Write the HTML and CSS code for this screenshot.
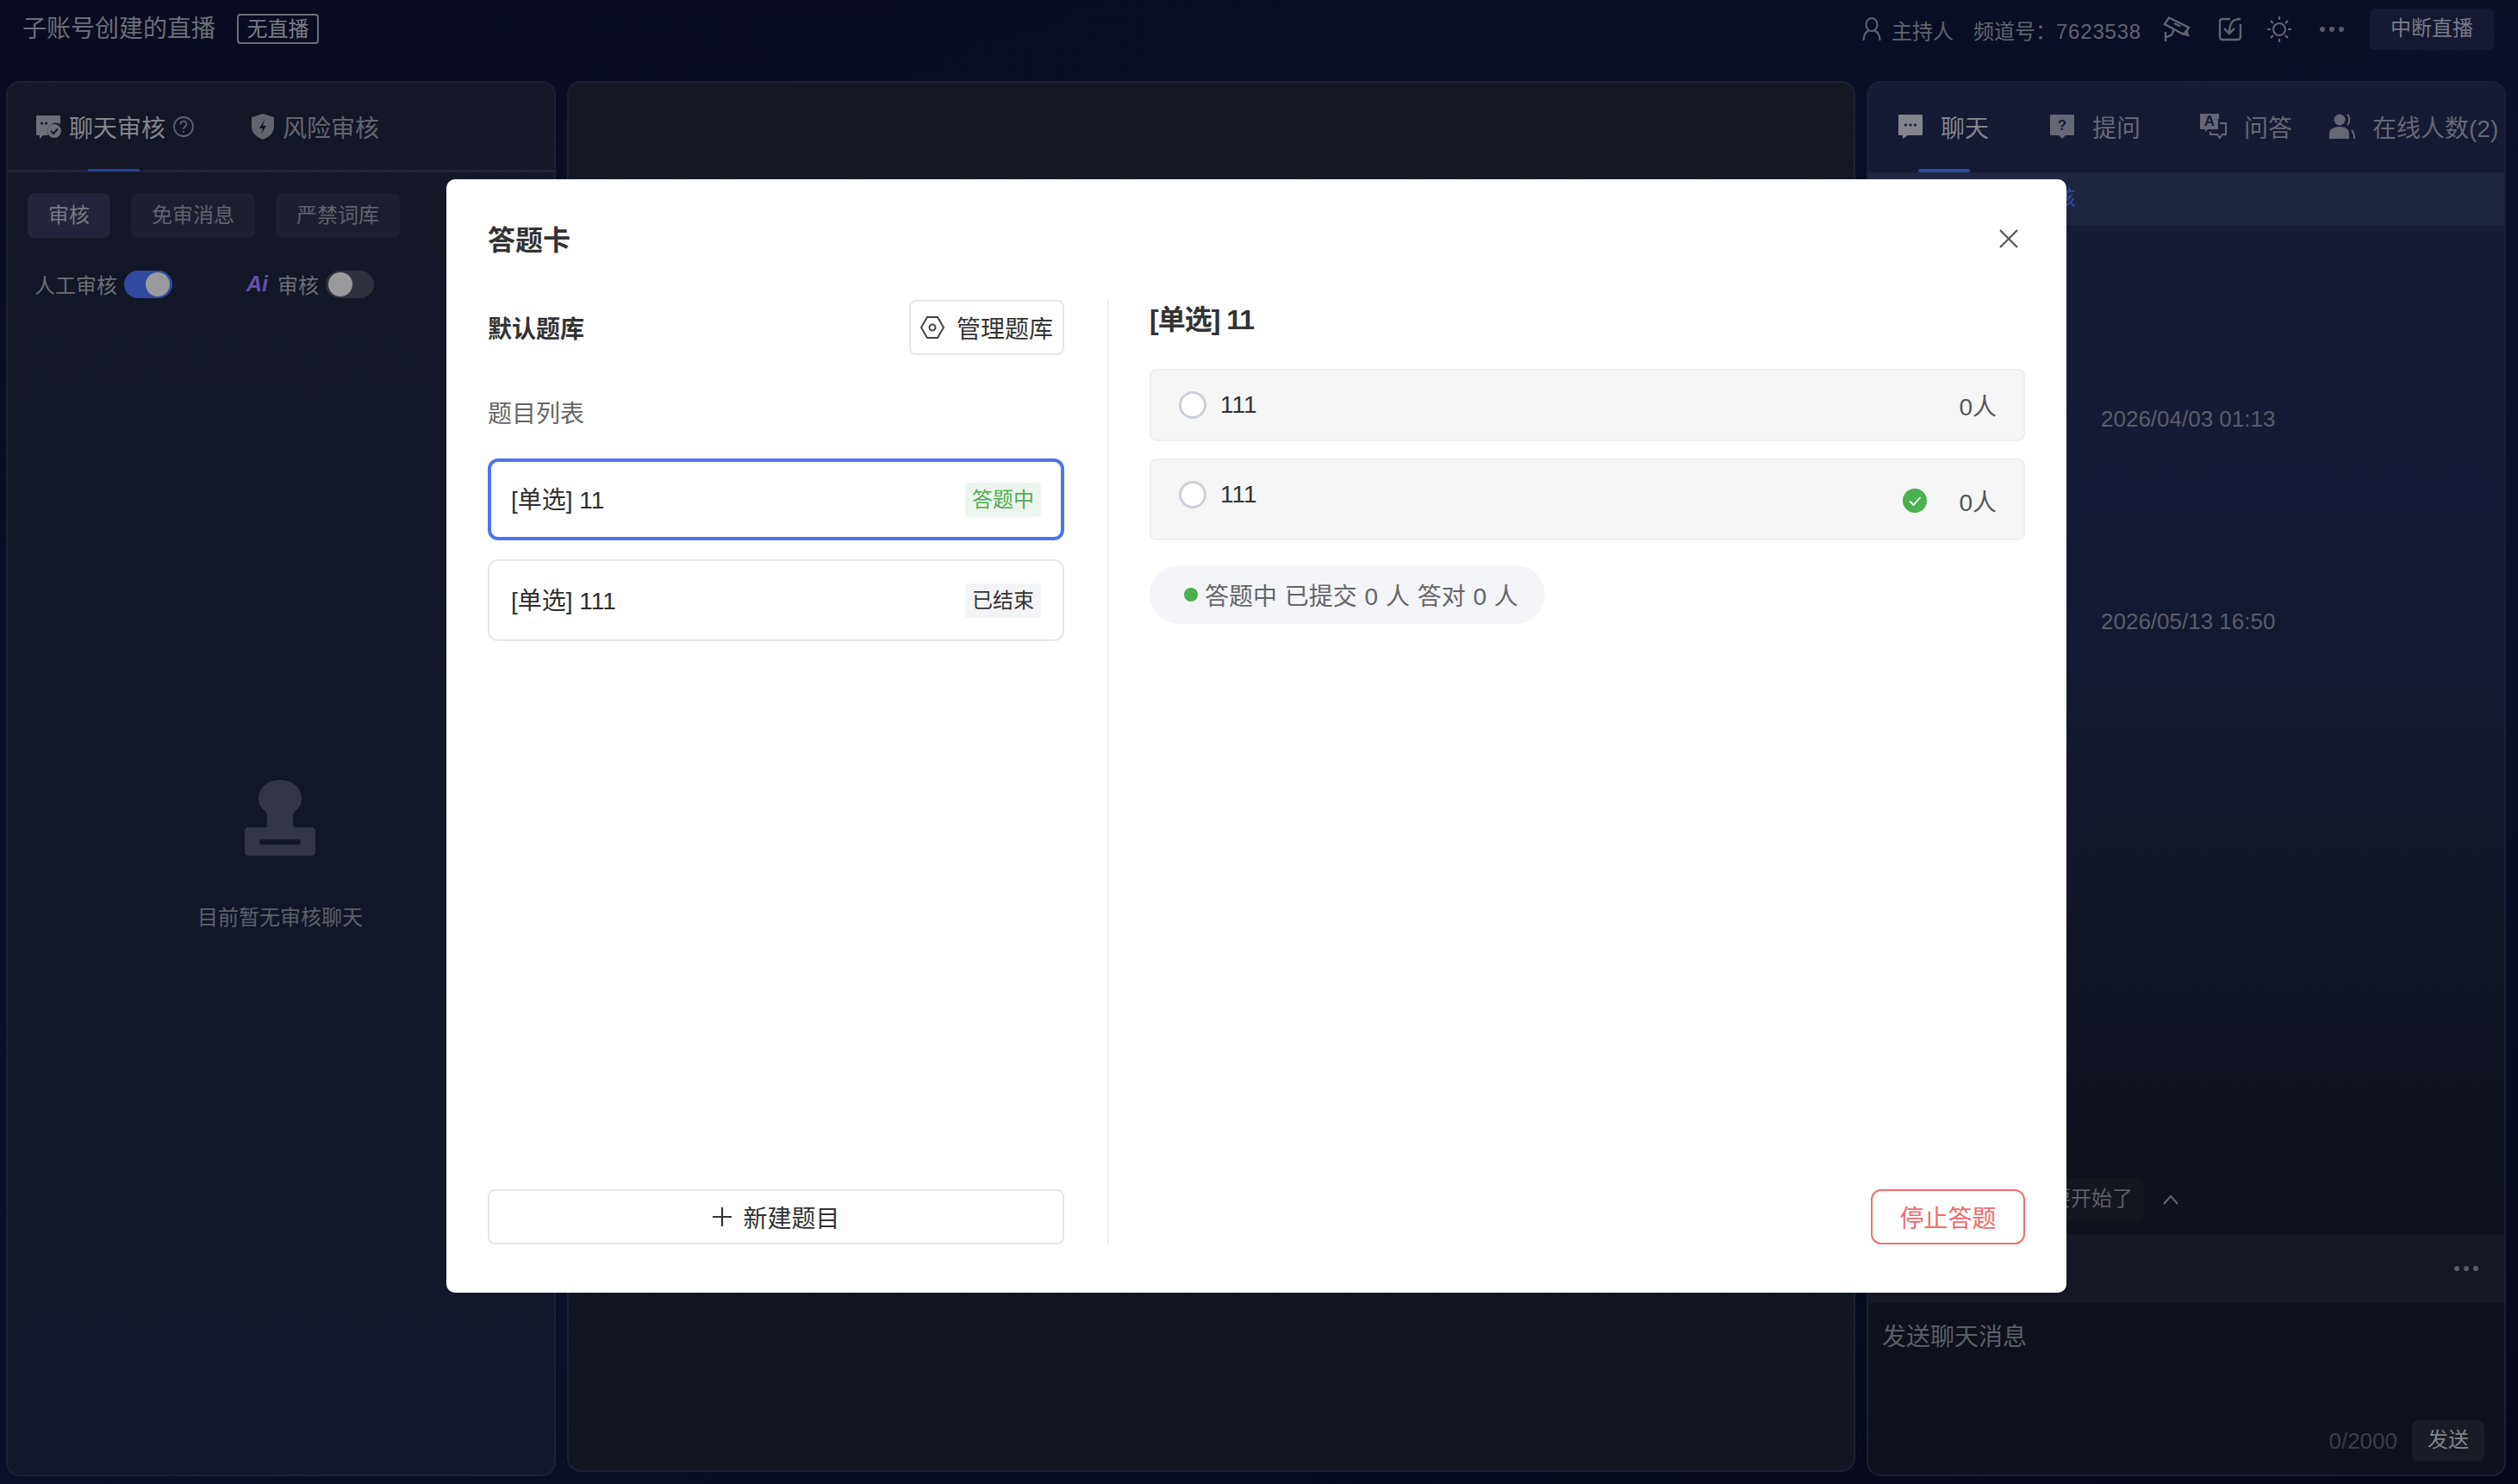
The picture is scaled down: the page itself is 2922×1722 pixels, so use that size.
FILE: index.html
```html
<!DOCTYPE html>
<html>
<head>
  <title>答题卡</title>
  <link rel="stylesheet" href="styles.css">
</head>
<body>

<div class="app">
  <!-- top bar -->
  <div class="topbar">
    <div class="live-title">子账号创建的直播</div>
    <div class="live-badge">无直播</div>
    <div class="top-right">
      <svg class="ic-user" width="22" height="28" viewBox="0 0 22 28" fill="none" stroke="#62646e" stroke-width="2"><ellipse cx="11" cy="8.5" rx="6.5" ry="7.5"/><path d="M1.5 27c0-7 3-10 6-11.5M20.5 27c0-7-3-10-6-11.5"/></svg>
      <span class="host">主持人</span>
      <span class="channel">频道号：<span class="channel-no">7623538</span></span>
      <svg class="ic-cam" width="32" height="30" viewBox="0 0 32 30" fill="none" stroke="#62646e" stroke-width="2.4"><path d="M7 1.500L30 13l-6 8L2 9z"/><path d="M13 8l7 3.500"/><path d="M3 18v11M3 24.500l7-3 3-7"/><path d="M23 20l5-2 1 4z" fill="#62646e"/></svg>
      <svg class="ic-doc" width="28" height="28" viewBox="0 0 28 28" fill="none" stroke="#62646e" stroke-width="2.4"><path d="M14 2H5a3 3 0 0 0-3 3v18a3 3 0 0 0 3 3h18a3 3 0 0 0 3-3V8"/><path d="M26 2c-8 0-13 3-13 17M7 13l6 6 6-6"/></svg>
      <svg class="ic-sun" width="28" height="30" viewBox="0 0 28 30" fill="none" stroke="#62646e" stroke-width="2.2"><circle cx="14" cy="15" r="7"/><path d="M14 0v4M14 26v4M0 15h4M24 15h4M4 5l3 3M21 22l3 3M24 5l-3 3M7 22l-3 3"/></svg>
      <span class="dots"><i></i><i></i><i></i></span>
      <div class="stop-live">中断直播</div>
    </div>
  </div>

  <div class="panels">
    <!-- left: moderation -->
    <div class="panel panel-left">
      <div class="left-tabs">
        <div class="left-tab on">
          <svg width="30" height="30" viewBox="0 0 30 30"><path fill="#6d6e78" d="M2 2h26a1 1 0 0 1 1 1v9a10 10 0 0 0-14 13H9l-4 4v-4H2a1 1 0 0 1-1-1V3a1 1 0 0 1 1-1z"/><circle cx="7.5" cy="11" r="1.5" fill="#131726"/><circle cx="12.5" cy="11" r="1.5" fill="#131726"/><circle cx="22" cy="20" r="8" fill="#6d6e78"/><path d="M18 20l3 3 5-5.500" fill="none" stroke="#131726" stroke-width="2"/></svg>
          <span>聊天审核</span>
          <svg class="help" width="24" height="24" viewBox="0 0 24 24" fill="none" stroke="#5f616c" stroke-width="1.8"><circle cx="12" cy="12" r="11"/><path d="M8.500 9.500c0-5 7-5 7-.5 0 3-3.500 2.500-3.500 6"/><path d="M12 17v2"/></svg>
        </div>
        <div class="left-tab">
          <svg width="28" height="30" viewBox="0 0 28 30"><path fill="#62646e" d="M14 0l13 4v11c0 8-6 12-13 15C7 27 1 23 1 15V4z"/><path fill="#131726" d="M16 7l-6 10h4l-2 7 6-10h-4z"/></svg>
          <span>风险审核</span>
        </div>
      </div>
      <div class="sub-btns">
        <div class="sub-btn on">审核</div>
        <div class="sub-btn">免审消息</div>
        <div class="sub-btn">严禁词库</div>
      </div>
      <div class="switches">
        <span class="switch-label">人工审核</span>
        <span class="toggle on"><i></i></span>
        <span class="ai">Ai</span>
        <span class="switch-label">审核</span>
        <span class="toggle"><i></i></span>
      </div>
      <div class="empty">
        <svg width="82" height="88" viewBox="0 0 82 88"><path fill="#333644" d="M41 0c14 0 25 9 25 22 0 6-3 10-6 13-3 2-4 4-4 7v9c0 2 1 4 3 4h19c2 0 4 2 4 4v25c0 2-2 4-4 4H4c-2 0-4-2-4-4V59c0-2 2-4 4-4h20c2 0 2-2 2-4v-9c0-3-1-5-4-7-3-3-6-7-6-13C16 9 27 0 41 0z"/><rect x="17" y="69" width="48" height="6" rx="3" fill="#12172a"/></svg>
        <div class="empty-text">目前暂无审核聊天</div>
      </div>
    </div>

    <!-- middle: stage -->
    <div class="panel panel-mid"></div>

    <!-- right: chat -->
    <div class="panel panel-right">
      <div class="right-tabs">
        <div class="right-tab on">
          <svg width="30" height="30" viewBox="0 0 30 30"><path fill="#83848c" d="M2 1h26a1 1 0 0 1 1 1v22a1 1 0 0 1-1 1H12l-6 4v-4H2a1 1 0 0 1-1-1V2a1 1 0 0 1 1-1z"/><circle cx="9.5" cy="13" r="1.6" fill="#161c36"/><circle cx="15" cy="13" r="1.6" fill="#161c36"/><circle cx="20.5" cy="13" r="1.6" fill="#161c36"/></svg>
          <span>聊天</span>
          <i class="tab-line"></i>
        </div>
        <div class="right-tab">
          <svg width="30" height="30" viewBox="0 0 30 30"><path fill="#676875" d="M2 1h26a1 1 0 0 1 1 1v22a1 1 0 0 1-1 1h-9l-4 4-4-4H2a1 1 0 0 1-1-1V2a1 1 0 0 1 1-1z"/><text x="15" y="19" class="glyph">?</text></svg>
          <span>提问</span>
        </div>
        <div class="right-tab">
          <svg width="32" height="30" viewBox="0 0 32 30"><path fill="#676875" d="M1 0h22v6h-1v12H10l-3 3v-3H1z"/><text x="12" y="14" class="glyph">A</text><path fill="none" stroke="#676875" stroke-width="2" d="M24 11h7v13h-4l-3 4-3-4H13v-3"/></svg>
          <span>问答</span>
        </div>
        <div class="right-tab">
          <svg width="30" height="30" viewBox="0 0 30 30"><circle cx="12" cy="7" r="6.5" fill="#676875"/><path fill="#676875" d="M0 29v-6c0-5 5-8 12-8s11 3 11 8v6z"/><path fill="none" stroke="#676875" stroke-width="2" d="M21 1c3 2 3 9 0 12M26 19c2 2 3 6 3 10"/></svg>
          <span>在线人数(2)</span>
        </div>
      </div>
      <div class="notice">聊天审核</div>
      <div class="messages">
        <div class="msg-time">2026/04/03 01:13</div>
        <div class="msg-time">2026/05/13 16:50</div>
      </div>
      <div class="pinned">
        <div class="pinned-chip">直播马上就要开始了</div>
        <svg width="18" height="12" viewBox="0 0 18 12" fill="none" stroke="#64666e" stroke-width="2"><path d="M1 11l8-9 8 9"/></svg>
      </div>
      <div class="toolbar"><span class="dots"><i></i><i></i><i></i></span></div>
      <div class="composer">
        <div class="placeholder">发送聊天消息</div>
        <div class="composer-foot">
          <span class="count">0/2000</span>
          <span class="send">发送</span>
        </div>
      </div>
    </div>
  </div>
</div>

<!-- dialog -->
<div class="modal">
  <div class="modal-head">
    <div class="modal-title">答题卡</div>
    <svg class="close" width="22" height="22" viewBox="0 0 22 22" fill="none" stroke="#555" stroke-width="2.2"><path d="M1 1l20 20M21 1L1 21"/></svg>
  </div>
  <div class="modal-body">
    <div class="col-left">
      <div class="bank-row">
        <div class="bank-name">默认题库</div>
        <div class="btn btn-manage">
          <svg width="28" height="30" viewBox="0 0 28 30" fill="none" stroke="#444" stroke-width="2"><path d="M8 3h12l7 12-7 12H8L1 15z"/><circle cx="14" cy="15" r="3.5"/></svg>
          管理题库
        </div>
      </div>
      <div class="list-label">题目列表</div>
      <div class="q-list">
        <div class="q-item active">
          <span class="q-name">[单选] 11</span>
          <span class="tag tag-green">答题中</span>
        </div>
        <div class="q-item">
          <span class="q-name">[单选] 111</span>
          <span class="tag">已结束</span>
        </div>
      </div>
      <div class="btn btn-new">
        <svg width="24" height="24" viewBox="0 0 24 24" stroke="#333" stroke-width="2.2"><path d="M12 1v22M1 12h22"/></svg>
        新建题目
      </div>
    </div>
    <div class="col-right">
      <div class="q-title">[单选] 11</div>
      <div class="opt">
        <div class="opt-main"><i class="radio"></i>111</div>
        <div class="opt-side">0人</div>
      </div>
      <div class="opt opt-correct">
        <div class="opt-main"><i class="radio"></i>111</div>
        <div class="opt-side">
          <svg width="28" height="28" viewBox="0 0 28 28"><circle cx="14" cy="14" r="14" fill="#4caf50"/><path d="M8 14.500l4.500 4.500 8-9" fill="none" stroke="#fff" stroke-width="1.8"/></svg>
          <span>0人</span>
        </div>
      </div>
      <div class="status"><i class="status-dot"></i>答题中 已提交 0 人 答对 0 人</div>
      <div class="btn btn-stop">停止答题</div>
    </div>
  </div>
</div>

</body>
</html>
```

FILE: styles.css
```css
* {
  box-sizing: border-box;
}
body {
  margin: 0;
  width: 2922px;
  height: 1722px;
  overflow: hidden;
  font-family: "Liberation Sans", "Noto Sans CJK SC", sans-serif;
  background: linear-gradient(160deg, #090c20 0%, #0b1029 60%, #050818 100%);
  position: relative;
}
.app {
  display: flex;
  flex-direction: column;
  height: 1722px;
}

/* top bar */
.topbar {
  height: 94px;
  flex: none;
  display: flex;
  align-items: flex-start;
  padding: 16px 28px 0 26px;
}
.live-title {
  font-size: 28px;
  line-height: 36px;
  color: #6c6e76;
}
.live-badge {
  margin-left: 25px;
  width: 95px;
  height: 35px;
  border: 2px solid #6c6e76;
  border-radius: 4px;
  font-size: 24px;
  line-height: 31px;
  text-align: center;
  color: #7c7e86;
}
.top-right {
  margin-left: auto;
  margin-top: -6px;
  height: 48px;
  display: flex;
  align-items: center;
  font-size: 24px;
  color: #62646e;
}
.host {
  margin-left: 12px;
}
.channel {
  margin-left: 23px;
}
.channel-no {
  letter-spacing: 0.8px;
}
.ic-cam {
  margin-left: 25px;
}
.ic-doc {
  margin-left: 32px;
}
.ic-sun {
  margin-left: 29px;
}
.top-right .dots {
  margin-left: 33px;
}
.dots {
  display: inline-flex;
  gap: 5px;
}
.dots i {
  width: 6px;
  height: 6px;
  border-radius: 50%;
  background: #5a5c66;
}
.stop-live {
  margin-left: 30px;
  width: 144px;
  height: 48px;
  line-height: 46px;
  text-align: center;
  background: #141830;
  border-radius: 6px;
  color: #787a88;
}

/* panels */
.panels {
  flex: 1;
  display: grid;
  grid-template-columns: 638px 1495px 742px;
  gap: 13px;
  padding: 0 13px 9px 7px;
  min-height: 0;
}
.panel {
  border: 2px solid #1c2034;
  border-radius: 16px;
  display: flex;
  flex-direction: column;
  overflow: hidden;
}
.panel-left {
  background: linear-gradient(180deg, #131726 0%, #11172a 100%);
}
.panel-mid {
  margin-bottom: 5px;
  background: linear-gradient(180deg, #141723 0%, #10151f 100%);
}
.panel-right {
  border-color: #181e36;
  background: linear-gradient(180deg, #161b33 0%, #151b36 30%, #0d111c 78%);
}

/* left panel */
.left-tabs {
  height: 104px;
  flex: none;
  display: flex;
  align-items: center;
  padding: 0 0 0 32px;
  border-bottom: 3px solid #1e2233;
  font-size: 28px;
  color: #63656f;
}
.left-tab {
  display: flex;
  align-items: center;
  position: relative;
  gap: 9px;
  margin-right: 66px;
}
.left-tab.on {
  color: #84858c;
}
.left-tab.on::after {
  content: "";
  position: absolute;
  left: 61px;
  bottom: -32px;
  width: 60px;
  height: 3px;
  background: #2b4290;
}
.sub-btns {
  display: flex;
  gap: 24px;
  margin: 24px 0 0 23px;
}
.sub-btn {
  height: 52px;
  line-height: 51px;
  padding: 0 24px;
  border-radius: 8px;
  background: #1b1f30;
  font-size: 24px;
  color: #60626c;
}
.sub-btn.on {
  background: #23263a;
  color: #787a82;
}
.switches {
  display: flex;
  align-items: center;
  margin: 36px 0 0 31px;
  font-size: 24px;
  color: #6c6e76;
}
.toggle {
  width: 56px;
  height: 32px;
  margin-left: 8px;
  border-radius: 16px;
  background: #2e323c;
  padding: 2px 3px;
  display: flex;
}
.toggle i {
  width: 28px;
  height: 28px;
  border-radius: 50%;
  background: #9a9a9c;
}
.toggle.on {
  background: #2f4a9e;
  justify-content: flex-end;
}
.ai {
  margin-left: 86px;
  margin-right: 10px;
  width: 26px;
  font: italic bold 25px "Liberation Sans", sans-serif;
  color: #6650a8;
}
.empty {
  display: flex;
  flex-direction: column;
  align-items: center;
  margin-top: 558px;
  padding-right: 2px;
}
.empty-text {
  margin-top: 56px;
  font-size: 24px;
  line-height: 32px;
  color: #5e6068;
}

/* right panel */
.right-tabs {
  height: 104px;
  flex: none;
  display: flex;
  align-items: center;
  padding: 0 0 2px 34px;
  font-size: 28px;
  color: #666873;
}
.right-tab {
  display: flex;
  align-items: center;
  gap: 20px;
  position: relative;
  margin-right: 70px;
}
.right-tab:nth-child(2) {
  margin-right: 68px;
}
.right-tab:nth-child(3) {
  margin-right: 43px;
}
.right-tab:last-child {
  margin-right: 0;
}
.right-tab.on {
  color: #83848c;
}
.tab-line {
  position: absolute;
  left: 24px;
  bottom: -33px;
  width: 60px;
  height: 4px;
  border-radius: 2px;
  background: #2f4a9e;
}
.notice {
  height: 61px;
  flex: none;
  background: #1f2640;
  padding-left: 145px;
  font-size: 24px;
  line-height: 60px;
  color: #2f4a9e;
}
.messages {
  flex: 1;
  padding: 208px 0 0 270px;
  font-size: 26px;
  color: #5c5e68;
}
.msg-time {
  height: 34px;
  line-height: 34px;
  margin-bottom: 201px;
}
.pinned {
  height: 48px;
  flex: none;
  display: flex;
  align-items: center;
  padding-left: 68px;
}
.pinned-chip {
  height: 48px;
  line-height: 46px;
  padding: 0 13px;
  width: 252px;
  border-radius: 6px;
  background: #14161f;
  font-size: 24px;
  white-space: nowrap;
  text-align: right;
  color: #5c5e66;
}
.pinned svg {
  margin-left: 22px;
}
.toolbar {
  height: 80px;
  margin-top: 16px;
  flex: none;
  background: #151824;
  display: flex;
  align-items: center;
  justify-content: flex-end;
  padding-right: 30px;
}
.composer {
  height: 199px;
  flex: none;
  padding: 20px 23px 15px 16px;
  display: flex;
  flex-direction: column;
  justify-content: space-between;
}
.placeholder {
  font-size: 28px;
  line-height: 40px;
  color: #5c5e68;
}
.composer-foot {
  display: flex;
  justify-content: flex-end;
  align-items: center;
  gap: 17px;
}
.count {
  font-size: 26px;
  color: #3c3e48;
}
.send {
  width: 84px;
  height: 48px;
  line-height: 46px;
  text-align: center;
  border-radius: 8px;
  background: #191b26;
  font-size: 24px;
  color: #83848a;
}
.glyph {
  font: bold 17px "Liberation Sans", sans-serif;
  fill: #161c36;
  text-anchor: middle;
}

/* dialog */
.modal {
  position: absolute;
  left: 518px;
  top: 208px;
  width: 1880px;
  height: 1292px;
  background: #fff;
  border-radius: 10px;
  padding: 0 48px 56px 48px;
  display: flex;
  flex-direction: column;
  color: #333;
}
.modal-head {
  height: 140px;
  flex: none;
  display: flex;
  align-items: center;
  justify-content: space-between;
  padding: 0 8px 0 0;
}
.modal-title {
  font-size: 32px;
  font-weight: bold;
  margin-bottom: 4px;
}
.close {
  margin-bottom: 2px;
}
.modal-body {
  flex: 1;
  display: flex;
  min-height: 0;
}
.col-left {
  width: 669px;
  flex: none;
  display: flex;
  flex-direction: column;
}
.bank-row {
  display: flex;
  justify-content: space-between;
  align-items: center;
}
.bank-name {
  font-size: 28px;
  font-weight: bold;
  margin-bottom: 1px;
}
.btn {
  height: 64px;
  border: 2px solid #e6e6e6;
  border-radius: 8px;
  display: flex;
  align-items: center;
  justify-content: center;
  font-size: 28px;
  color: #333;
}
.btn-manage {
  width: 180px;
  gap: 14px;
}
.list-label {
  margin-top: 49px;
  font-size: 28px;
  line-height: 40px;
  color: #666;
}
.q-list {
  margin-top: 31px;
  display: flex;
  flex-direction: column;
  gap: 22px;
}
.q-item {
  height: 95px;
  border: 2px solid #e6e6e6;
  border-radius: 12px;
  display: flex;
  align-items: center;
  justify-content: space-between;
  padding: 0 25px;
  font-size: 28px;
}
.q-item.active {
  border: 4px solid #4e74f0;
  padding: 0 23px;
}
.q-name {
  margin-bottom: 4px;
  color: #2e2e2e;
}
.tag {
  width: 88px;
  height: 40px;
  line-height: 39px;
  text-align: center;
  border-radius: 4px;
  background: #f3f4f6;
  font-size: 24px;
}
.tag-green {
  background: #edf6ee;
  color: #4caf50;
}
.btn-new {
  width: 100%;
  margin-top: auto;
  gap: 12px;
}
.col-right {
  flex: 1;
  margin-left: 50px;
  border-left: 2px solid #eee;
  padding-left: 47px;
  display: flex;
  flex-direction: column;
  align-items: stretch;
}
.q-title {
  font-size: 32px;
  line-height: 46px;
  font-weight: bold;
  letter-spacing: -1px;
  margin-bottom: 34px;
}
.opt {
  height: 84px;
  margin-bottom: 20px;
  background: #f6f6f6;
  border: 2px solid #eeeeee;
  border-radius: 8px;
  display: flex;
  align-items: center;
  justify-content: space-between;
  padding: 0 31px 0 32px;
  font-size: 28px;
}
.opt-main {
  display: flex;
  align-items: center;
  gap: 16px;
}
.opt-side {
  display: flex;
  align-items: center;
  gap: 37px;
  color: #555;
}
.radio {
  width: 32px;
  height: 32px;
  border: 3px solid #ccd0da;
  border-radius: 50%;
  background: #fff;
}
.opt-correct {
  height: 95px;
  margin-bottom: 29px;
  align-items: flex-start;
  padding-top: 24px;
}
.opt-correct .opt-side {
  margin-top: 3px;
  height: 40px;
}
.status {
  align-self: flex-start;
  width: 459px;
  height: 68px;
  border-radius: 34px;
  background: #f3f5f9;
  display: flex;
  align-items: center;
  padding-left: 40px;
  font-size: 28px;
  word-spacing: 1px;
  color: #666;
  white-space: nowrap;
}
.status-dot {
  width: 16px;
  height: 16px;
  margin-right: 8px;
  border-radius: 50%;
  background: #4caf50;
}
.btn-stop {
  margin-top: auto;
  align-self: flex-end;
  width: 179px;
  border-color: #f07070;
  border-radius: 12px;
  color: #f06a6a;
}
```
